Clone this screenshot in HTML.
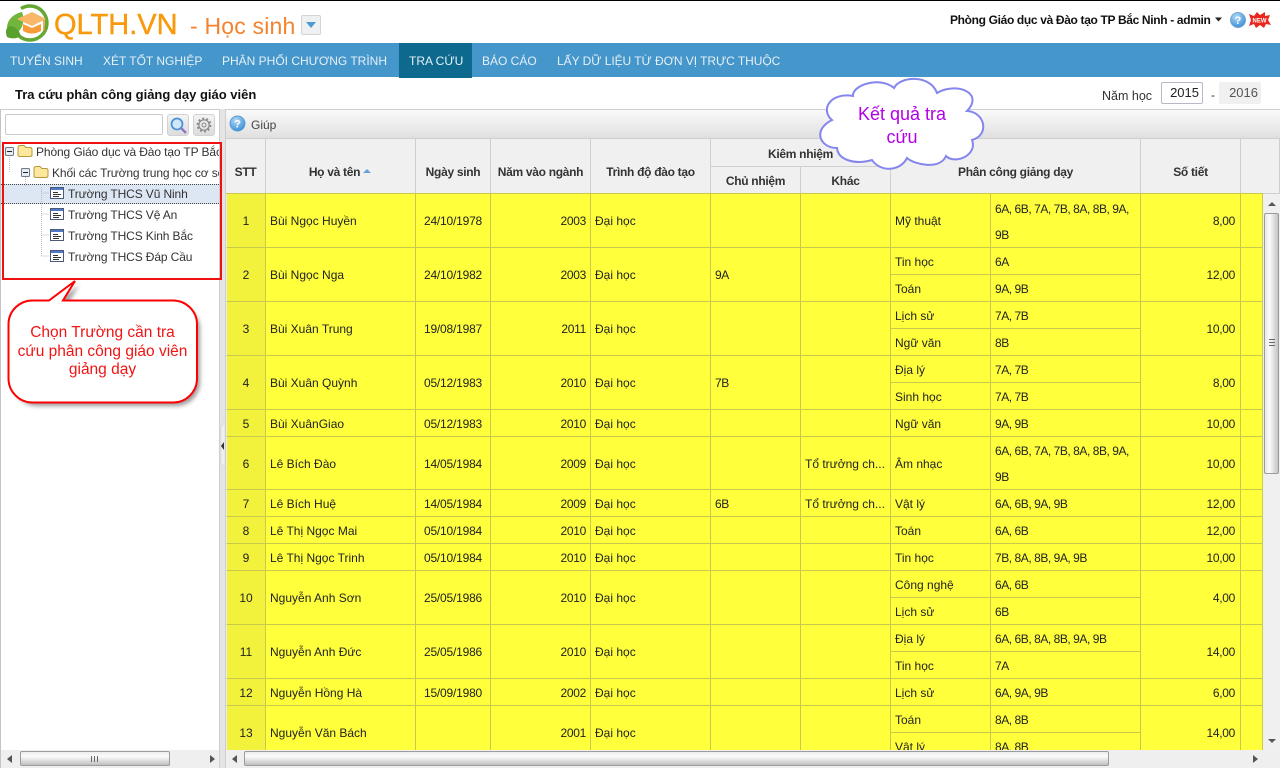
<!DOCTYPE html>
<html lang="vi"><head><meta charset="utf-8"><title>QLTH.VN</title>
<style>
*{box-sizing:border-box}
html,body{margin:0;padding:0;width:1280px;height:768px;overflow:hidden;background:#fff;font-family:"Liberation Sans",sans-serif;font-size:12px;color:#222}
.a{position:absolute;white-space:nowrap}
.nav{top:43px;height:34px;line-height:36px;font-size:12px;color:#e6f0f7}
table{border-collapse:separate;border-spacing:0;table-layout:fixed;position:absolute}
#hd td{background:#f0f0f0;border-right:1px solid #cfcfcf;border-bottom:1px solid #cfcfcf;text-align:center;font-weight:bold;color:#333;padding:0;white-space:nowrap;overflow:hidden;letter-spacing:-.3px}
#hd td.m{padding-top:11px}
#hd td.k{padding-top:2px}
#hd td.u{padding-top:1px}
#bd td{background:#ffff3c;border-right:1px solid #c9c94e;border-bottom:1px solid #c9c94e;padding:1px 4px 0;white-space:nowrap;overflow:hidden;color:#222;line-height:16px}
#bd td.s{background:#f2f23c;text-align:center;border-left:1px solid #ececec}
#bd td.c{text-align:center;letter-spacing:-.2px}
#bd td.r{text-align:right;letter-spacing:-.3px}
#bd td.t{text-align:right;padding-right:5px;letter-spacing:-.3px}
#bd td.l{letter-spacing:-.45px}
#bd td.w{line-height:26px;letter-spacing:-.45px;padding-top:0}
#bd td.w span{position:relative;top:1px}
.tt{font-size:12px;color:#333;height:21px;line-height:21px;letter-spacing:-.12px}
.thumbv{background:linear-gradient(90deg,#e8e8e8,#fbfbfb 35%,#c4c4c4);border:1px solid #9c9c9c;border-radius:2px}
.thumbh{background:linear-gradient(180deg,#ededed,#fbfbfb 35%,#bfbfbf);border:1px solid #9c9c9c;border-radius:2px}
</style></head><body>
<div class="a" style="left:0;top:0;width:1280px;height:1px;background:#000"></div>

<svg class="a" style="left:0;top:0" width="56" height="44" viewBox="0 0 56 44">
<path d="M21 8.500A17 17 0 1 1 19 36" fill="none" stroke="#63a832" stroke-width="3.500"/>
<path d="M7 28C7 20 13 14 22 12C25 19 23 28 18 32C13 34 9 32 7 28Z" fill="#72b53c"/>
<path d="M7 37C5 32 6 28 9 26C15 26 19 30 21 36C16 39 11 39 7 37Z" fill="#5aa02c"/>
<path d="M17 19L32 12L46 19L32 26Z" fill="#fab768"/>
<path d="M23 24L32 28L41 24V31Q32 36 23 31Z" fill="#f59b38"/>
<path d="M44 20V31" stroke="#e88f2b" stroke-width="1.500"/>
</svg>
<div class="a" style="left:54px;top:8px;font-size:29px;line-height:34px;color:#f99a0c;-webkit-text-stroke:.4px #f99a0c">QLTH.VN</div>
<div class="a" style="left:190px;top:11px;font-size:23px;line-height:30px;color:#f5822d;letter-spacing:.2px">- Học sinh</div>
<div class="a" style="left:301px;top:15px;width:20px;height:20px;background:#eef0f2;border:1px solid #d4d4d4;border-radius:2px"></div>
<svg class="a" style="left:301px;top:15px" width="20" height="20"><path d="M5 7H15L10 13Z" fill="#4c9bd0"/></svg>

<div class="a" style="left:950px;top:12px;line-height:16px;font-weight:bold;color:#111;letter-spacing:-.34px">Phòng Giáo dục và Đào tạo TP Bắc Ninh - admin</div>
<svg class="a" style="left:1214px;top:16px" width="10" height="8"><path d="M1 1.500H8L4.500 5.500Z" fill="#222"/></svg>
<svg class="a" style="left:1229px;top:11px" width="18" height="18"><defs><radialGradient id="g1" cx=".4" cy=".3" r=".8"><stop offset="0" stop-color="#b4dcf7"/><stop offset="1" stop-color="#2d85d2"/></radialGradient></defs><circle cx="9" cy="9" r="7.500" fill="url(#g1)" stroke="#6ea9d8"/><text x="9" y="13" font-size="11" font-weight="bold" text-anchor="middle" fill="#fff" font-family="Liberation Sans">?</text></svg>
<svg class="a" style="left:1248px;top:11px" width="23" height="18"><path d="M1 3L6 5L9 1L12 4L17 1L17 5L22 4L20 9L23 14L18 13L16 17L12 14L8 17L6 13L1 15L3 9Z" fill="#e8281e"/><text x="11.500" y="11.500" font-size="6" font-weight="bold" text-anchor="middle" fill="#fff" font-family="Liberation Sans">NEW</text></svg>

<div class="a" style="left:0;top:43px;width:1280px;height:34px;background:#4496cb"></div>
<div class="a" style="left:399px;top:43px;width:73px;height:35px;background:#0d6a8e"></div>
<div class="a nav" style="left:10px">TUYỂN SINH</div>
<div class="a nav" style="left:103px">XÉT TỐT NGHIỆP</div>
<div class="a nav" style="left:222px">PHÂN PHỐI CHƯƠNG TRÌNH</div>
<div class="a nav" style="left:409px">TRA CỨU</div>
<div class="a nav" style="left:482px">BÁO CÁO</div>
<div class="a nav" style="left:557px;letter-spacing:-.05px">LẤY DỮ LIỆU TỪ ĐƠN VỊ TRỰC THUỘC</div>

<div class="a" style="left:15px;top:87px;line-height:16px;font-size:13px;font-weight:bold;color:#111">Tra cứu phân công giảng dạy giáo viên</div>
<div class="a" style="left:1102px;top:88px;line-height:16px;color:#333;font-size:12.500px">Năm học</div>
<div class="a" style="left:1161px;top:82px;width:42px;height:22px;border:1px solid #b8b8c8;border-radius:2px;text-align:right;padding-right:3px;line-height:20px;font-size:13px;color:#222">2015</div>
<div class="a" style="left:1211px;top:87px;line-height:16px;color:#333">-</div>
<div class="a" style="left:1219px;top:82px;width:42px;height:22px;background:#f0f0f0;border-radius:2px;text-align:right;padding-right:3px;line-height:22px;font-size:13px;color:#555">2016</div>

<!-- left panel -->
<div class="a" style="left:0;top:109px;width:1280px;height:1px;background:#cfcfcf"></div>
<div class="a" style="left:0;top:109px;width:1px;height:659px;background:#c4c4c4"></div>
<div class="a" style="left:219px;top:109px;width:7px;height:659px;background:#e4e4e4;border-left:1px solid #cfcfcf;border-right:1px solid #cfcfcf"></div>
<svg class="a" style="left:220px;top:420px" width="6" height="50"><path d="M5 2L1 7V43L5 48Z" fill="#efefef" stroke="#cfcfcf" stroke-width=".5"/><path d="M4 22V30L1 26Z" fill="#333"/></svg>
<div class="a" style="left:5px;top:114px;width:158px;height:21px;border:1px solid #ccc;border-radius:2px;background:#fff"></div>
<div class="a" style="left:167px;top:114px;width:22px;height:22px;border:1px solid #d2d2d2;border-radius:3px;background:linear-gradient(#f4f4f4,#dcdcdc)"></div>
<svg class="a" style="left:167px;top:114px" width="22" height="22"><circle cx="10" cy="10" r="5.500" fill="#cfe8fa" stroke="#4a94d6" stroke-width="1.800"/><path d="M14 14L19 19" stroke="#8a78c8" stroke-width="2.400"/></svg>
<div class="a" style="left:193px;top:114px;width:22px;height:22px;border:1px solid #d2d2d2;border-radius:3px;background:linear-gradient(#f4f4f4,#dcdcdc)"></div>
<svg class="a" style="left:193px;top:114px" width="22" height="22"><circle cx="11" cy="11" r="5.200" fill="none" stroke="#888" stroke-width="1.200"/><circle cx="11" cy="11" r="2" fill="none" stroke="#888"/><circle cx="11" cy="11" r="6.600" fill="none" stroke="#888" stroke-width="1.600" stroke-dasharray="2 2.150"/></svg>

<div class="a" style="left:1px;top:184px;width:218px;height:20px;background:#dde6f3;border-top:1px dotted #444;border-bottom:1px dotted #444"></div>
<svg class="a" style="left:0;top:140px" width="70" height="130">
<g stroke="#bbb" stroke-dasharray="1 1" fill="none"><path d="M9.500 15V32M25.500 37V46M41.500 53H49M41.500 74H49M41.500 95H49M41.500 116H49M41.500 47V116"/></g>
<g fill="#e6ecf2" stroke="#6c7a8c"><rect x="5.500" y="7.500" width="8" height="8" rx="1"/><rect x="21.500" y="28.500" width="8" height="8" rx="1"/></g>
<path d="M7 11.500H12M23 32.500H28" stroke="#222"/>
<g fill="#fbe89c" stroke="#b8973a"><path d="M18 8Q18 5.500 20 5.500H24L26 7.500H30Q32 7.500 32 9.500V14.500Q32 16.500 30 16.500H20Q18 16.500 18 14.500Z"/><path d="M34 29Q34 26.500 36 26.500H40L42 28.500H46Q48 28.500 48 30.500V35.500Q48 37.500 46 37.500H36Q34 37.500 34 35.500Z"/></g>
<g fill="#fff" stroke="#4a5a78"><rect x="50.500" y="47.500" width="13" height="11"/><rect x="50.500" y="68.500" width="13" height="11"/><rect x="50.500" y="89.500" width="13" height="11"/><rect x="50.500" y="110.500" width="13" height="11"/></g>
<path d="M51 48H63V50H51ZM51 69H63V71H51ZM51 90H63V92H51ZM51 111H63V113H51Z" fill="#4f78c8"/>
<path d="M53 52.500H58M53 54.500H61M53 56.500H59M53 73.500H58M53 75.500H61M53 77.500H59M53 94.500H58M53 96.500H61M53 98.500H59M53 115.500H58M53 117.500H61M53 119.500H59" stroke="#333" stroke-width="1"/>
</svg>
<div class="a tt" style="left:36px;top:142px;width:183px;overflow:hidden">Phòng Giáo dục và Đào tạo TP Bắc Ninh</div>
<div class="a tt" style="left:52px;top:163px;width:167px;overflow:hidden">Khối các Trường trung học cơ sở</div>
<div class="a tt" style="left:68px;top:184px">Trường THCS Vũ Ninh</div>
<div class="a tt" style="left:68px;top:205px">Trường THCS Vệ An</div>
<div class="a tt" style="left:68px;top:226px">Trường THCS Kinh Bắc</div>
<div class="a tt" style="left:68px;top:247px">Trường THCS Đáp Cầu</div>

<!-- left hscroll -->
<div class="a" style="left:1px;top:750px;width:218px;height:18px;background:#efefef"></div>
<div class="a thumbh" style="left:20px;top:751px;width:150px;height:15px"></div>
<svg class="a" style="left:1px;top:750px" width="218" height="18"><path d="M11 5V13L6 9Z" fill="#555"/><path d="M209 5V13L214 9Z" fill="#555"/><path d="M90.500 6V12M93.500 6V12M96.500 6V12" stroke="#666"/></svg>

<!-- toolbar -->
<div class="a" style="left:226px;top:110px;width:1054px;height:29px;background:linear-gradient(#fafafa,#e0e0e0);border-bottom:1px solid #cfcfcf"></div>
<svg class="a" style="left:229px;top:115px" width="18" height="18"><defs><radialGradient id="g2" cx=".4" cy=".3" r=".8"><stop offset="0" stop-color="#b4dcf7"/><stop offset="1" stop-color="#2d85d2"/></radialGradient></defs><circle cx="8.500" cy="8.500" r="7.500" fill="url(#g2)" stroke="#5d9ed4"/><text x="8.500" y="12.500" font-size="11" font-weight="bold" text-anchor="middle" fill="#fff" font-family="Liberation Sans">?</text></svg>
<div class="a" style="left:251px;top:117px;line-height:16px;color:#444">Giúp</div>

<!-- header -->
<table id="hd" style="left:226px;top:139px;width:1054px">
<colgroup><col style="width:40px"><col style="width:150px"><col style="width:75px"><col style="width:100px"><col style="width:120px"><col style="width:90px"><col style="width:90px"><col style="width:250px"><col style="width:100px"><col style="width:39px"></colgroup>
<tr style="height:28px"><td class="m" rowspan="2">STT</td><td class="m" rowspan="2">Họ và tên <svg width="9" height="6" style="vertical-align:2px"><path d="M0 5H8L4 1Z" fill="#6a9fd8"/></svg></td><td class="m" rowspan="2">Ngày sinh</td><td class="m" rowspan="2">Năm vào ngành</td><td class="m" rowspan="2">Trình độ đào tạo</td><td class="k" colspan="2">Kiêm nhiệm</td><td class="m" rowspan="2">Phân công giảng dạy</td><td class="m" rowspan="2">Số tiết</td><td rowspan="2"></td></tr>
<tr style="height:27px"><td class="u">Chủ nhiệm</td><td class="u">Khác</td></tr>
</table>
<div class="a" style="left:226px;top:193px;width:1037px;height:1px;background:#c9c94e"></div>

<!-- body -->
<div class="a" style="left:226px;top:194px;width:1037px;height:556px;overflow:hidden;background:#fff">
<table id="bd" style="left:0;top:0;width:1037px">
<colgroup><col style="width:40px"><col style="width:150px"><col style="width:75px"><col style="width:100px"><col style="width:120px"><col style="width:90px"><col style="width:90px"><col style="width:100px"><col style="width:150px"><col style="width:100px"><col style="width:22px"></colgroup>
<tr style="height:54px"><td class="s">1</td><td>Bùi Ngọc Huyền</td><td class="c">24/10/1978</td><td class="r">2003</td><td>Đại học</td><td></td><td></td><td>Mỹ thuật</td><td class="w"><span>6A, 6B, 7A, 7B, 8A, 8B, 9A,<br>9B</span></td><td class="t">8,00</td><td></td></tr>
<tr style="height:27px"><td class="s" rowspan="2">2</td><td rowspan="2">Bùi Ngọc Nga</td><td class="c" rowspan="2">24/10/1982</td><td class="r" rowspan="2">2003</td><td rowspan="2">Đại học</td><td class="l" rowspan="2">9A</td><td rowspan="2"></td><td>Tin học</td><td class="l">6A</td><td class="t" rowspan="2">12,00</td><td rowspan="2"></td></tr>
<tr style="height:27px"><td>Toán</td><td class="l">9A, 9B</td></tr>
<tr style="height:27px"><td class="s" rowspan="2">3</td><td rowspan="2">Bùi Xuân Trung</td><td class="c" rowspan="2">19/08/1987</td><td class="r" rowspan="2">2011</td><td rowspan="2">Đại học</td><td rowspan="2"></td><td rowspan="2"></td><td>Lịch sử</td><td class="l">7A, 7B</td><td class="t" rowspan="2">10,00</td><td rowspan="2"></td></tr>
<tr style="height:27px"><td>Ngữ văn</td><td class="l">8B</td></tr>
<tr style="height:27px"><td class="s" rowspan="2">4</td><td rowspan="2">Bùi Xuân Quỳnh</td><td class="c" rowspan="2">05/12/1983</td><td class="r" rowspan="2">2010</td><td rowspan="2">Đại học</td><td class="l" rowspan="2">7B</td><td rowspan="2"></td><td>Địa lý</td><td class="l">7A, 7B</td><td class="t" rowspan="2">8,00</td><td rowspan="2"></td></tr>
<tr style="height:27px"><td>Sinh học</td><td class="l">7A, 7B</td></tr>
<tr style="height:27px"><td class="s">5</td><td>Bùi XuânGiao</td><td class="c">05/12/1983</td><td class="r">2010</td><td>Đại học</td><td></td><td></td><td>Ngữ văn</td><td class="l">9A, 9B</td><td class="t">10,00</td><td></td></tr>
<tr style="height:53px"><td class="s">6</td><td>Lê Bích Đào</td><td class="c">14/05/1984</td><td class="r">2009</td><td>Đại học</td><td></td><td>Tổ trưởng ch...</td><td>Âm nhạc</td><td class="w"><span>6A, 6B, 7A, 7B, 8A, 8B, 9A,<br>9B</span></td><td class="t">10,00</td><td></td></tr>
<tr style="height:27px"><td class="s">7</td><td>Lê Bích Huệ</td><td class="c">14/05/1984</td><td class="r">2009</td><td>Đại học</td><td class="l">6B</td><td>Tổ trưởng ch...</td><td>Vật lý</td><td class="l">6A, 6B, 9A, 9B</td><td class="t">12,00</td><td></td></tr>
<tr style="height:27px"><td class="s">8</td><td>Lê Thị Ngọc Mai</td><td class="c">05/10/1984</td><td class="r">2010</td><td>Đại học</td><td></td><td></td><td>Toán</td><td class="l">6A, 6B</td><td class="t">12,00</td><td></td></tr>
<tr style="height:27px"><td class="s">9</td><td>Lê Thị Ngọc Trinh</td><td class="c">05/10/1984</td><td class="r">2010</td><td>Đại học</td><td></td><td></td><td>Tin học</td><td class="l">7B, 8A, 8B, 9A, 9B</td><td class="t">10,00</td><td></td></tr>
<tr style="height:27px"><td class="s" rowspan="2">10</td><td rowspan="2">Nguyễn Anh Sơn</td><td class="c" rowspan="2">25/05/1986</td><td class="r" rowspan="2">2010</td><td rowspan="2">Đại học</td><td rowspan="2"></td><td rowspan="2"></td><td>Công nghệ</td><td class="l">6A, 6B</td><td class="t" rowspan="2">4,00</td><td rowspan="2"></td></tr>
<tr style="height:27px"><td>Lịch sử</td><td class="l">6B</td></tr>
<tr style="height:27px"><td class="s" rowspan="2">11</td><td rowspan="2">Nguyễn Anh Đức</td><td class="c" rowspan="2">25/05/1986</td><td class="r" rowspan="2">2010</td><td rowspan="2">Đại học</td><td rowspan="2"></td><td rowspan="2"></td><td>Địa lý</td><td class="l">6A, 6B, 8A, 8B, 9A, 9B</td><td class="t" rowspan="2">14,00</td><td rowspan="2"></td></tr>
<tr style="height:27px"><td>Tin học</td><td class="l">7A</td></tr>
<tr style="height:27px"><td class="s">12</td><td>Nguyễn Hồng Hà</td><td class="c">15/09/1980</td><td class="r">2002</td><td>Đại học</td><td></td><td></td><td>Lịch sử</td><td class="l">6A, 9A, 9B</td><td class="t">6,00</td><td></td></tr>
<tr style="height:27px"><td class="s" rowspan="2">13</td><td rowspan="2">Nguyễn Văn Bách</td><td class="c" rowspan="2"></td><td class="r" rowspan="2">2001</td><td rowspan="2">Đại học</td><td rowspan="2"></td><td rowspan="2"></td><td>Toán</td><td class="l">8A, 8B</td><td class="t" rowspan="2">14,00</td><td rowspan="2"></td></tr>
<tr style="height:27px"><td>Vật lý</td><td class="l">8A, 8B</td></tr>
</table>
</div>

<!-- v scroll -->
<div class="a" style="left:1263px;top:194px;width:17px;height:556px;background:#f0f0f0"></div>
<div class="a thumbv" style="left:1264px;top:213px;width:15px;height:261px"></div>
<svg class="a" style="left:1263px;top:194px" width="17" height="556"><path d="M5 12H13L9 8Z" fill="#555"/><path d="M5 545H13L9 549Z" fill="#555"/><path d="M6 145.500H12M6 148.500H12M6 151.500H12" stroke="#666"/></svg>

<!-- h scroll -->
<div class="a" style="left:226px;top:750px;width:1054px;height:18px;background:#efefef"></div>
<div class="a thumbh" style="left:244px;top:751px;width:865px;height:15px"></div>
<svg class="a" style="left:226px;top:750px" width="1054" height="18"><path d="M11 5V13L6 9Z" fill="#555"/><path d="M1027 5V13L1032 9Z" fill="#555"/></svg>

<!-- cloud -->
<svg class="a" style="left:0;top:0" width="1280" height="200">
<path d="M853 96C852 85 880 76 894 88C900 76 930 74 937 93C955 82 985 92 967 111C985 112 990 135 972 140C978 155 955 165 946 156C940 170 915 165 907 158C900 172 880 172 872 160C855 165 838 160 837 148C820 148 812 130 832 120C820 110 830 92 853 96Z" fill="#fff" stroke="#8585ee" stroke-width="2"/>
</svg>
<div class="a" style="left:827px;top:103px;width:150px;text-align:center;font-size:18px;line-height:23px;color:#b400e6;white-space:normal">Kết quả tra<br>cứu</div>

<!-- red annotation -->
<div class="a" style="left:2px;top:142px;width:220px;height:138px;border:2px solid #f01010"></div>
<svg class="a" style="left:0;top:270px" width="225" height="150">
<defs><filter id="sh" x="-10%" y="-10%" width="125%" height="130%"><feGaussianBlur stdDeviation="2"/></filter></defs>
<path d="M34 31H49L75 11L63 31H172A24 24 0 0 1 196 55V108A24 24 0 0 1 172 132H33A24 24 0 0 1 9 108V55A24 24 0 0 1 34 31Z" fill="#666" opacity=".65" filter="url(#sh)" transform="translate(4 4)"/>
<path d="M34 30.500H49L75 11L63 30.500H172A24 24 0 0 1 197 55V108A24 24 0 0 1 172 132.500H33A24 24 0 0 1 8.500 108V55A24 24 0 0 1 34 30.500Z" fill="#fff" stroke="#f00" stroke-width="2"/>
</svg>
<div class="a" style="left:8px;top:324px;width:189px;text-align:center;font-size:15.500px;line-height:18.500px;color:#f01414;white-space:normal">Chọn Trường cần tra<br>cứu phân công giáo viên<br>giảng dạy</div>
</body></html>
